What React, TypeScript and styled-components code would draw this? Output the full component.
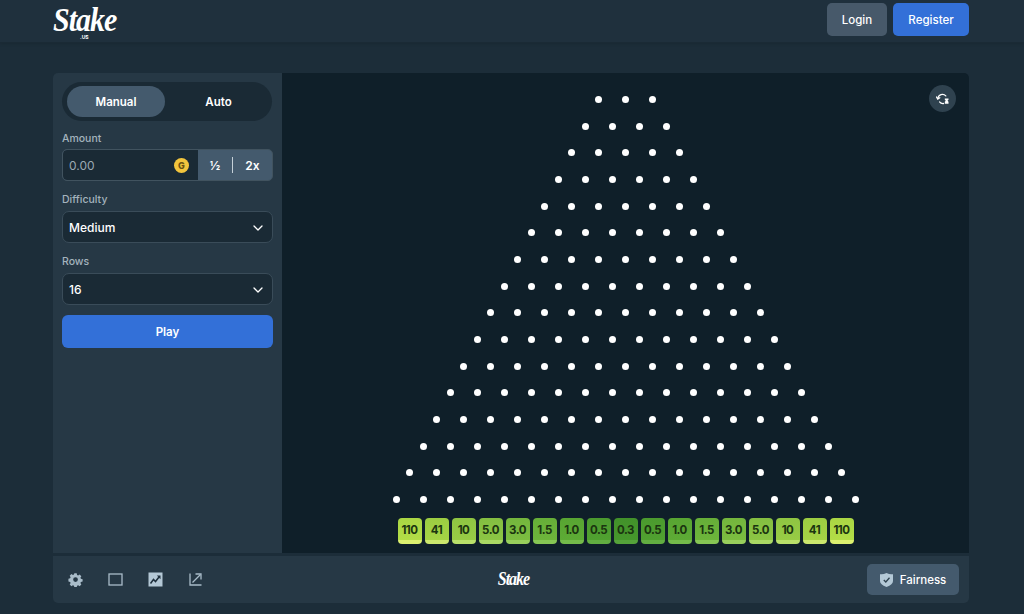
import React from "react";
import styled, { createGlobalStyle } from "styled-components";

const Global = createGlobalStyle`
  html, body { margin: 0; padding: 0; }
  body { background: #1c2d39; font-family: "Inter", "Liberation Sans", sans-serif; color: #fff; }
  * { box-sizing: border-box; }
`;
const Page = styled.div`
  width: 1024px; height: 614px; overflow: hidden;
  background: #1c2d39; display: flex; flex-direction: column;
`;
const Header = styled.header`
  height: 43px; flex: none; background: #1f303d; border-bottom: 1px solid #1a2a35;
  padding: 0 55px 0 53px; display: flex; justify-content: space-between; align-items: flex-start;
  box-shadow: 0 1px 3px rgba(0,0,0,.12);
`;
const LogoWrap = styled.div`
  position: relative; width: 64px; height: 38px; padding-top: 7px;
`;
const LogoText = styled.div<{ $size: number }>`
  font-family: "Liberation Serif", serif; font-style: italic; font-weight: 700;
  font-size: ${p => p.$size}px; letter-spacing: -1px; color: #fff; line-height: .8; white-space: nowrap;
  transform: scaleY(1.15);
`;
const LogoSub = styled.span`
  position: absolute; left: 27px; top: 34px; font-size: 5px; line-height: 6px; font-weight: 700; color: #fff;
`;
const HeaderBtns = styled.div`
  display: flex; gap: 6px; padding-top: 3px;
`;
const HeaderBtn = styled.button<{ $primary?: boolean }>`
  height: 33px; width: ${p => p.$primary ? 76 : 60}px; border: 0; border-radius: 5px; padding: 1px 0 0;
  background: ${p => p.$primary ? "#3370d8" : "#47596a"}; color: #fff;
  font: 500 11.5px "Inter", sans-serif;
`;
const Main = styled.main`
  flex: 1; padding: 30px 55px 11px 53px; display: flex; flex-direction: column; gap: 3px;
`;
const Game = styled.section`
  height: 480px; display: flex; border-radius: 5px 5px 0 0; overflow: hidden;
`;
const Side = styled.aside`
  width: 229px; flex: none; background: #263845; padding: 9px 9px 0 9px;
  display: flex; flex-direction: column;
`;
const Toggle = styled.div`
  height: 39px; width: 210px; background: #1a2a35; border-radius: 20px; padding: 4px 0 4px 5px;
  display: flex;
`;
const Tab = styled.div<{ $active?: boolean }>`
  flex: ${p => p.$active ? "0 0 98px" : "1"}; height: 31px; border-radius: 16px;
  background: ${p => p.$active ? "#445a6d" : "transparent"};
  display: flex; align-items: center; justify-content: center; padding-top: 1px;
  font-size: 11.5px; font-weight: 600; color: #fff;
`;
const Label = styled.div<{ $gap?: number }>`
  font-size: 10.5px; font-weight: 500; color: #a4b3bd; line-height: 14px; margin-bottom: ${p => p.$gap ?? 4}px;
`;
const Field = styled.div<{ $top: number }>`
  margin-top: ${p => p.$top}px;
`;
const AmountBox = styled.div`
  height: 32px; width: 211px; display: flex; border-radius: 5px; overflow: hidden;
  background: #445a6d;
  border: 1px solid #41535f;
`;
const AmountInput = styled.div`
  width: 135px; height: 100%; background: #1a2a35; border-radius: 4px 0 0 4px; padding: 0 8px 0 6px;
  display: flex; align-items: center; justify-content: space-between;
  font-size: 12px; color: #9aa9b3;
`;
const Coin = styled.span`
  width: 15px; height: 15px; border-radius: 50%; background: #f2c53d; color: #6b5312; margin-right: 1px;
  display: flex; align-items: center; justify-content: center; font-size: 9px; font-weight: 800;
`;
const Halves = styled.div`
  flex: 1; display: flex; align-items: center; font-size: 12px; font-weight: 600; color: #fff;
`;
const HalfCell = styled.span<{ $w: number }>`
  width: ${p => p.$w}px; text-align: center;
`;
const Divider = styled.span`
  width: 1px; height: 16px; background: #c5d0d8;
`;
const SelectBox = styled.div`
  height: 32px; width: 211px; background: #1a2a35; border: 1px solid #3a4c59; border-radius: 7px;
  padding: 1px 8px 0 6px; display: flex; align-items: center; justify-content: space-between;
  font-size: 12px; font-weight: 500; color: #fff;
`;
const PlayBtn = styled.button`
  margin-top: 10px; height: 33px; width: 211px; border: 0; border-radius: 6px; background: #3370d8;
  color: #fff; padding: 1px 0 0; font: 600 11.5px "Inter", sans-serif;
`;
const Board = styled.div`
  position: relative; flex: 1; background: #0f1f29;
  padding: 13px 0 0; display: flex; flex-direction: column; align-items: center;
`;
const PegRow = styled.div`
  height: 26.7px; display: flex; align-items: center; gap: 20px;
`;
const Peg = styled.span`
  width: 7px; height: 7px; border-radius: 50%; background: #fff; flex: none;
`;
const Bins = styled.div`
  display: flex; gap: 3px; margin-top: 5px;
`;
const Bin = styled.div<{ $top: string; $lip: string; $hi: string }>`
  width: 24px; height: 26px; border-radius: 4px;
  background: linear-gradient(${p => p.$hi}, ${p => p.$top});
  border-bottom: 4px solid ${p => p.$lip}; padding-top: 2px;
  display: flex; align-items: center; justify-content: center;
  font-size: 11.5px; font-weight: 700; color: #1b3510; letter-spacing: -.5px;
`;
const RoundBtn = styled.div`
  position: absolute; top: 12px; right: 13px; width: 27px; height: 27px; border-radius: 50%;
  background: #2f424f; display: flex; align-items: center; justify-content: center;
`;
const Footer = styled.footer`
  height: 47px; background: #263845; border-radius: 0 0 5px 5px; padding: 0 10px 0 15px;
  display: grid; grid-template-columns: 1fr auto 1fr; align-items: center;
`;
const FootIcons = styled.div`
  display: flex; gap: 25px; align-items: center;
`;
const IconSlot = styled.span`
  width: 15px; height: 15px; display: flex; color: #a9bcc9;
`;
const FootRight = styled.div`
  display: flex; justify-content: flex-end;
`;
const Fairness = styled.button`
  width: 92px; height: 31px; border: 0; border-radius: 5px; background: #445a6d; color: #fff;
  font: 500 11.5px "Inter", sans-serif; display: flex; align-items: center; justify-content: center; gap: 7px;
`;

const rows = Array.from({ length: 16 }, (_, i) => i + 3);
const bins: [string, string, string, string][] = [
  ["110", "#b3dd47", "#dcf06f", "#aad644"], ["41", "#a5d445", "#cbe76d", "#9ccd42"], ["10", "#98cc45", "#b9e06a", "#8fc542"],
  ["5.0", "#8cc544", "#aad964", "#84be41"], ["3.0", "#7cbd40", "#98cf5c", "#74b63d"], ["1.5", "#6db53b", "#86c654", "#66ae38"],
  ["1.0", "#5dab35", "#74bb4a", "#58a532"], ["0.5", "#50a130", "#62ae41", "#4b9a2e"], ["0.3", "#46982c", "#55a33a", "#42912a"],
  ["0.5", "#50a130", "#62ae41", "#4b9a2e"], ["1.0", "#5dab35", "#74bb4a", "#58a532"], ["1.5", "#6db53b", "#86c654", "#66ae38"],
  ["3.0", "#7cbd40", "#98cf5c", "#74b63d"], ["5.0", "#8cc544", "#aad964", "#84be41"], ["10", "#98cc45", "#b9e06a", "#8fc542"],
  ["41", "#a5d445", "#cbe76d", "#9ccd42"], ["110", "#b3dd47", "#dcf06f", "#aad644"],
];

const Chevron = () => (
  <svg width="12" height="12" viewBox="0 0 12 12" fill="none" stroke="#fff" strokeWidth="1.3" strokeLinecap="round" strokeLinejoin="round">
    <path d="M2 4l4 4 4-4" />
  </svg>
);

export default function App() {
  return (
    <Page>
      <Global />
      <Header>
        <LogoWrap>
          <LogoText $size={30}>Stake</LogoText>
          <LogoSub>.US</LogoSub>
        </LogoWrap>
        <HeaderBtns>
          <HeaderBtn>Login</HeaderBtn>
          <HeaderBtn $primary>Register</HeaderBtn>
        </HeaderBtns>
      </Header>
      <Main>
        <Game>
          <Side>
            <Toggle>
              <Tab $active>Manual</Tab>
              <Tab>Auto</Tab>
            </Toggle>
            <Field $top={11}>
              <Label $gap={3}>Amount</Label>
              <AmountBox>
                <AmountInput>0.00<Coin>G</Coin></AmountInput>
                <Halves><HalfCell $w={34}>½</HalfCell><Divider /><HalfCell $w={39}>2x</HalfCell></Halves>
              </AmountBox>
            </Field>
            <Field $top={12}>
              <Label>Difficulty</Label>
              <SelectBox>Medium<Chevron /></SelectBox>
            </Field>
            <Field $top={12}>
              <Label>Rows</Label>
              <SelectBox>16<Chevron /></SelectBox>
            </Field>
            <PlayBtn>Play</PlayBtn>
          </Side>
          <Board>
            {rows.map(n => (
              <PegRow key={n}>
                {Array.from({ length: n }, (_, i) => <Peg key={i} />)}
              </PegRow>
            ))}
            <Bins>
              {bins.map(([t, a, b, h], i) => <Bin key={i} $top={a} $lip={b} $hi={h}>{t}</Bin>)}
            </Bins>
            <RoundBtn>
              <svg width="14" height="14" viewBox="0 0 14 14" fill="none" stroke="#fff" strokeWidth="1.3" strokeLinecap="round">
                <path d="M1.8 6.5a4.6 4.6 0 0 1 8-2.6" />
                <path d="M7.5 11.5a4.6 4.6 0 0 1-4-1.6" />
                <path d="M0.5 5L1.8 7L3.8 5.8" />
                <path d="M8.8 6.5h3.7v1.2l-1 1 1 1v2h-3.7v-2l1-1-1-1z" fill="#fff" stroke="none" />
              </svg>
            </RoundBtn>
          </Board>
        </Game>
        <Footer>
          <FootIcons>
            <IconSlot>
              <svg width="15" height="15" viewBox="0 0 15 15">
                <path transform="translate(0.7 0.7) scale(0.91)" fillRule="evenodd" fill="currentColor" d="M6.2 0.6h2.6l.4 1.9 1.2.5 1.6-1 1.9 1.9-1 1.6.5 1.2 1.9.4v2.6l-1.9.4-.5 1.2 1 1.6-1.9 1.9-1.6-1-1.2.5-.4 1.9H6.2l-.4-1.9-1.2-.5-1.6 1-1.9-1.9 1-1.6-.5-1.2-1.9-.4V6.6l1.9-.4.5-1.2-1-1.6 1.9-1.9 1.6 1 1.2-.5zM7.5 5a2.6 2.6 0 1 0 0 5.2 2.6 2.6 0 0 0 0-5.2z" />
              </svg>
            </IconSlot>
            <IconSlot>
              <svg width="15" height="15" viewBox="0 0 15 15" fill="none" stroke="currentColor" strokeWidth="1.3">
                <rect x="1" y="2" width="13" height="11" />
              </svg>
            </IconSlot>
            <IconSlot>
              <svg width="15" height="15" viewBox="0 0 15 15">
                <rect x="0.5" y="0.5" width="14" height="14" fill="#b4c8d6" />
                <path d="M2.5 11.5L5.5 7.5L7.5 9.5L11 5" fill="none" stroke="#1f303d" strokeWidth="1.5" />
                <path d="M8.8 3.5H12.5V7.2Z" fill="#1f303d" />
              </svg>
            </IconSlot>
            <IconSlot>
              <svg width="15" height="15" viewBox="0 0 15 15" fill="none" stroke="currentColor" strokeWidth="1.3">
                <path d="M2 1.5V13H13.5" />
                <path d="M4.5 10.5L12.5 2.5" />
                <path d="M7.5 2H13V7.5" />
              </svg>
            </IconSlot>
          </FootIcons>
          <LogoText $size={16}>Stake</LogoText>
          <FootRight>
            <Fairness>
              <svg width="13" height="14" viewBox="0 0 13 14">
                <path d="M0 1.2Q3 1.8 6.5 0Q10 1.8 13 1.2V8Q13 11.5 6.5 14Q0 11.5 0 8Z" fill="#b4c8d6" />
                <path d="M3.8 7L5.8 9L9.5 4.8" fill="none" stroke="#2f424f" strokeWidth="1.3" />
              </svg>
              Fairness
            </Fairness>
          </FootRight>
        </Footer>
      </Main>
    </Page>
  );
}
